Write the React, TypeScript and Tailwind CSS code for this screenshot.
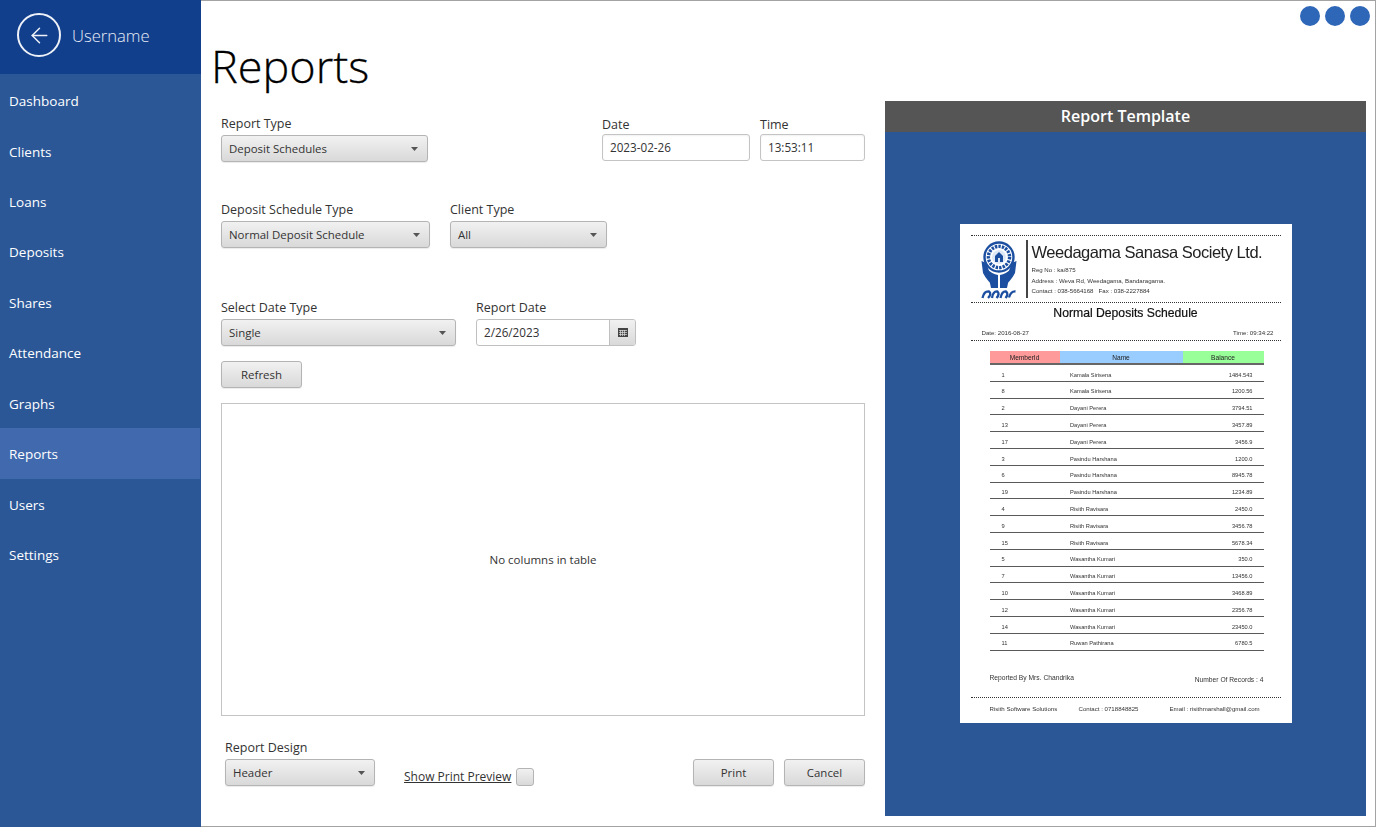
import { ArrowLeft } from "lucide-react";

const nav = ["Dashboard", "Clients", "Loans", "Deposits", "Shares", "Attendance", "Graphs", "Reports", "Users", "Settings"];

const rows = [
  ["1", "Kamala Sirisena", "1484.543"],
  ["8", "Kamala Sirisena", "1200.56"],
  ["2", "Dayani Perera", "3794.51"],
  ["13", "Dayani Perera", "3457.89"],
  ["17", "Dayani Perera", "3456.9"],
  ["3", "Pasindu Harshana", "1200.0"],
  ["6", "Pasindu Harshana", "8945.78"],
  ["19", "Pasindu Harshana", "1234.89"],
  ["4", "Risith Ravisara", "2450.0"],
  ["9", "Risith Ravisara", "3456.78"],
  ["15", "Risith Ravisara", "5678.34"],
  ["5", "Wasantha Kumari", "350.0"],
  ["7", "Wasantha Kumari", "13456.0"],
  ["10", "Wasantha Kumari", "3468.89"],
  ["12", "Wasantha Kumari", "2356.78"],
  ["14", "Wasantha Kumari", "23450.0"],
  ["11", "Ruwan Pathirana", "6780.5"],
];

function Caret() {
  return (
    <svg width="7" height="4" viewBox="0 0 7 4" className="mr-[2px] shrink-0">
      <path d="M0 0h7L3.5 4z" fill="#555" />
    </svg>
  );
}

function Select({ value, className }: { value: string; className: string }) {
  return (
    <div className={`flex h-[27px] items-center justify-between rounded-[3px] border border-[#b4b4b4] bg-gradient-to-b from-[#f1f1f1] to-[#d9d9d9] pl-[7px] pr-[7px] text-[11.45px] text-[#333] shadow-[0_1px_1px_rgba(0,0,0,0.08)] ${className}`}>
      <span className="pt-[1px]">{value}</span>
      <Caret />
    </div>
  );
}

function Button({ label, className }: { label: string; className: string }) {
  return (
    <div className={`flex h-[27px] items-center justify-center rounded-[3px] border border-[#b4b4b4] bg-gradient-to-b from-[#f1f1f1] to-[#d9d9d9] pt-[1px] text-[11.45px] text-[#333] shadow-[0_1px_1px_rgba(0,0,0,0.08)] ${className}`}>
      {label}
    </div>
  );
}

function Label({ text }: { text: string }) {
  return <div className="h-[18px] leading-[18px] text-[#333]">{text}</div>;
}

function Input({ value, className }: { value: string; className: string }) {
  return (
    <div className={`flex h-[27px] items-center rounded-[3px] border border-[#c4c4c4] bg-white pl-[7px] pt-[1px] text-[11.7px] text-[#333] shadow-[inset_0_1px_2px_rgba(0,0,0,0.06)] ${className}`}>
      {value}
    </div>
  );
}

function Dots({ className }: { className: string }) {
  return <div className={`h-0 border-t-[1.5px] border-dotted border-[#333] ${className}`} />;
}

function Logo() {
  return (
    <svg width="36" height="60" viewBox="0 0 36 60" className="shrink-0">
      <circle cx="18" cy="17" r="14.5" fill="none" stroke="#1c4fa0" strokeWidth="2.4" />
      <circle cx="18" cy="17" r="10.6" fill="none" stroke="#1c4fa0" strokeWidth="3.4" strokeDasharray="2.4 1.1" />
      <circle cx="18" cy="17" r="7" fill="#dfe8f5" />
      <path d="M14 22v-6l4-4 4 4v6h-3v-4h-2v4z" fill="#1c4fa0" />
      <path d="M0.5 21 L2 33 Q6 41 14 47 L14 41 Q8 34 5.5 23 Z" fill="#1c4fa0" />
      <path d="M35.5 21 L34 33 Q30 41 22 47 L22 41 Q28 34 30.5 23 Z" fill="#1c4fa0" />
      <path d="M6 29 Q11 34 17 35 L17 48 L10 48 Z M30 29 Q25 34 19 35 L19 48 L26 48 Z" fill="#1c4fa0" />
      <path d="M1.5 58 Q3 51 8 51.5 Q11 54 7 58 M11 58 Q12 51 16.5 51.5 Q19 54 15.5 58 M19.5 58 Q21 51 25 51.5 Q28 54 24.5 58 M28 57.5 Q30 51 34.5 51.5" fill="none" stroke="#1c4fa0" strokeWidth="2.3" />
    </svg>
  );
}

function Paper() {
  return (
    <div className="flex h-[499px] w-[332px] flex-col bg-white text-[#333] blur-[0.4px] [font-family:'Liberation_Sans',Arial,sans-serif]">
      <Dots className="mx-[11px] mt-[11px]" />
      <div className="mt-[4px] flex pl-[21px]">
        <Logo />
        <div className="ml-[9px] h-[58px] w-[2px] bg-[#444]" />
        <div className="ml-[4px] flex flex-col">
          <div className="text-[16.5px] leading-[24px] tracking-[-0.48px] text-[#222]">Weedagama Sanasa Society Ltd.</div>
          <div className="text-[6.1px] leading-[11px]">Reg No : ka/875</div>
          <div className="text-[6.1px] leading-[11px]">Address : Weva Rd, Weedagama, Bandaragama.</div>
          <div className="text-[6.1px] leading-[10px]">Contact : 038-5664168 &nbsp; Fax : 038-2227884</div>
        </div>
      </div>
      <Dots className="mx-[11px] mt-[2px]" />
      <div className="mt-[2px] text-center text-[12.2px] leading-[16px] text-[#111] [-webkit-text-stroke:0.2px_#111]">Normal Deposits Schedule</div>
      <div className="mt-[8px] flex justify-between pl-[22px] pr-[18px] text-[6.1px] leading-[8px]">
        <span>Date: 2016-08-27</span>
        <span>Time: 09:34:22</span>
      </div>
      <Dots className="mx-[11px] mt-[3px]" />
      <div className="ml-[30px] mr-[28px] mt-[10px] flex h-[14px] border-b-2 border-[#666] text-[6.6px] leading-[13px] text-[#222]">
        <div className="h-[12px] w-[70px] bg-[#ff9a9a] text-center">MemberId</div>
        <div className="h-[12px] w-[123px] bg-[#99ccff] text-center">Name</div>
        <div className="h-[12px] w-[81px] bg-[#99ff99] text-center">Balance</div>
      </div>
      <div className="ml-[30px] mr-[28px] flex flex-col">
        {rows.map((r) => (
          <div key={r[0]} className="flex h-[16.8px] items-center border-b-[1.5px] border-[#5a5a5a] pt-[4px] text-[5.7px]">
            <span className="w-[80.5px] pl-[12px]">{r[0]}</span>
            <span className="flex-1">{r[1]}</span>
            <span className="pr-[11px]">{r[2]}</span>
          </div>
        ))}
      </div>
      <div className="ml-[30px] mr-[28px] mt-[23px] flex items-start justify-between text-[6.7px] leading-[8px]">
        <span>Reported By Mrs. Chandrika</span>
        <span className="mt-[2px]">Number Of Records : 4</span>
      </div>
      <Dots className="mx-[11px] mt-[13px]" />
      <div className="mx-[30px] mt-[7px] flex text-[6.1px] leading-[8px]">
        <span className="w-[89px]">Risith Software Solutions</span>
        <span className="w-[91px]">Contact : 0718848825</span>
        <span>Email : risithmarshall@gmail.com</span>
      </div>
    </div>
  );
}

export default function App() {
  return (
    <div className="flex h-[827px] w-[1376px] overflow-hidden bg-white text-[12.5px] [font-family:'Open_Sans','Noto_Sans',sans-serif]">
      <aside className="flex w-[201px] shrink-0 flex-col bg-[#2b5797]">
        <div className="flex h-[74px] shrink-0 items-center bg-[#123f8c] pb-[4px] pl-[17px]">
          <div className="flex h-[44px] w-[44px] items-center justify-center rounded-full border-2 border-[#eef2f8] text-[#eef2f8]">
            <ArrowLeft size={25} strokeWidth={1.4} />
          </div>
          <span className="ml-[11px] pt-[3px] text-[16.6px] font-light text-[#e8edf6]">Username</span>
        </div>
        <nav className="mt-[1px] flex flex-col">
          {nav.map((n) => (
            <div
              key={n}
              className={`flex h-[50.44px] items-center pl-[9px] pt-[2px] text-[13.5px] font-medium text-white ${n === "Reports" ? "mr-[1px] bg-[#4169ad]" : ""}`}
            >
              {n}
            </div>
          ))}
        </nav>
      </aside>
      <main className="flex min-w-0 flex-1 flex-col border-y border-r border-[#a3a3a3]">
        <div className="mr-[5px] mt-[5px] flex h-[20px] justify-end gap-[5px]">
          <div className="h-[20px] w-[20px] rounded-full bg-[#2f67b8]" />
          <div className="h-[20px] w-[20px] rounded-full bg-[#2f67b8]" />
          <div className="h-[20px] w-[20px] rounded-full bg-[#2f67b8]" />
        </div>
        <h1 className="h-[75px] pl-[10px] text-[45px] font-light leading-[80px] text-black [-webkit-text-stroke:0.3px_#000]">Reports</h1>
        <div className="flex flex-1 items-start pl-[20px]">
          <section className="flex w-[644px] shrink-0 flex-col">
            <div className="flex h-[61px] items-start">
              <div className="pt-[14px]">
                <Label text="Report Type" />
                <Select value="Deposit Schedules" className="mt-[2px] w-[207px]" />
              </div>
              <div className="ml-[174px] pt-[15px]">
                <Label text="Date" />
                <Input value="2023-02-26" className="w-[148px]" />
              </div>
              <div className="ml-[10px] pt-[15px]">
                <Label text="Time" />
                <Input value="13:53:11" className="w-[105px]" />
              </div>
            </div>
            <div className="mt-[39px] flex gap-[20px]">
              <div>
                <Label text="Deposit Schedule Type" />
                <Select value="Normal Deposit Schedule" className="mt-[2px] w-[209px]" />
              </div>
              <div>
                <Label text="Client Type" />
                <Select value="All" className="mt-[2px] w-[157px]" />
              </div>
            </div>
            <div className="mt-[51px] flex gap-[20px]">
              <div>
                <Label text="Select Date Type" />
                <Select value="Single" className="mt-[2px] w-[235px]" />
              </div>
              <div>
                <Label text="Report Date" />
                <div className="mt-[2px] flex h-[27px] w-[160px] rounded-[3px] border border-[#c0c0c0] bg-white text-[11.7px] text-[#333]">
                  <div className="flex flex-1 items-center pl-[7px] pt-[1px]">2/26/2023</div>
                  <div className="flex w-[26px] items-center justify-center rounded-r-[2px] border-l border-[#c0c0c0] bg-gradient-to-b from-[#f1f1f1] to-[#d9d9d9]">
                    <svg width="10" height="9" viewBox="0 0 10 9">
                      <rect width="10" height="9" fill="#444" />
                      <path d="M1 2.5h8M1 4.5h8M1 6.5h8M2.5 2v6M4.5 2v6M6.5 2v6" stroke="#ddd" strokeWidth="0.7" />
                    </svg>
                  </div>
                </div>
              </div>
            </div>
            <Button label="Refresh" className="mt-[15px] w-[81px]" />
            <div className="mt-[15px] flex h-[313px] items-center justify-center border border-[#c4c4c4] pt-[1px] text-[11.5px] text-[#333]">
              No columns in table
            </div>
            <div className="mt-[23px] flex items-end pl-[4px]">
              <div>
                <Label text="Report Design" />
                <Select value="Header" className="mt-[2px] w-[150px]" />
              </div>
              <span className="ml-[29px] text-[12px] leading-[18px] text-[#333] underline">Show Print Preview</span>
              <div className="ml-[5px] h-[18px] w-[18px] rounded-[3px] border border-[#b4b4b4] bg-gradient-to-b from-[#f1f1f1] to-[#d9d9d9]" />
              <Button label="Print" className="ml-auto w-[81px]" />
              <Button label="Cancel" className="ml-[10px] w-[81px]" />
            </div>
          </section>
          <section className="ml-[20px] flex h-[715px] w-[481px] shrink-0 flex-col bg-[#2b5797]">
            <div className="flex h-[31px] shrink-0 items-center justify-center bg-[#555555] pb-[2px] text-[16px] font-semibold text-white">
              Report Template
            </div>
            <div className="flex flex-1 items-start justify-center pt-[92px]">
              <Paper />
            </div>
          </section>
        </div>
      </main>
    </div>
  );
}
